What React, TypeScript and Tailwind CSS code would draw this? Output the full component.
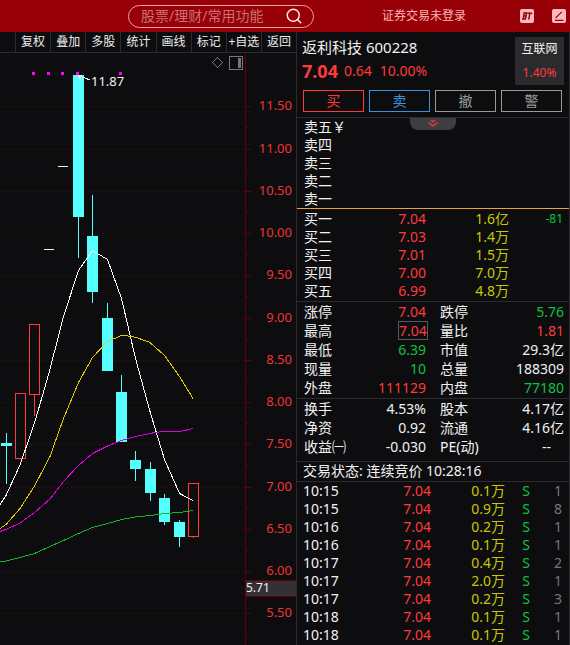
import { Search } from "lucide-react";

const TOOLS = ["复权", "叠加", "多股", "统计", "画线", "标记", "+自选", "返回"];

const ACTIONS = [
  { t: "买", c: "border-[#ff3a3a] text-[#ff3a3a]" },
  { t: "卖", c: "border-[#3f8fdc] text-[#3f8fdc]" },
  { t: "撤", c: "border-[#999999] text-[#999999]" },
  { t: "警", c: "border-[#999999] text-[#999999]" },
];

const ASKS = ["卖五￥", "卖四", "卖三", "卖二", "卖一"];

const BIDS = [
  { n: "买一", p: "7.04", v: "1.6亿", d: "-81" },
  { n: "买二", p: "7.03", v: "1.4万", d: "" },
  { n: "买三", p: "7.01", v: "1.5万", d: "" },
  { n: "买四", p: "7.00", v: "7.0万", d: "" },
  { n: "买五", p: "6.99", v: "4.8万", d: "" },
];

const RED = "text-[#ff3a3a]";
const GREEN = "text-[#0cc33f]";
const WHITE = "text-[#f2f2f2]";

type Stat = { k: string; v: string; c: string; boxed?: boolean };

const STATS: [Stat, Stat][] = [
  [{ k: "涨停", v: "7.04", c: RED }, { k: "跌停", v: "5.76", c: GREEN }],
  [{ k: "最高", v: "7.04", c: RED, boxed: true }, { k: "量比", v: "1.81", c: RED }],
  [{ k: "最低", v: "6.39", c: GREEN }, { k: "市值", v: "29.3亿", c: WHITE }],
  [{ k: "现量", v: "10", c: GREEN }, { k: "总量", v: "188309", c: WHITE }],
  [{ k: "外盘", v: "111129", c: RED }, { k: "内盘", v: "77180", c: GREEN }],
];

const FUNDAMENTALS: [Stat, Stat][] = [
  [{ k: "换手", v: "4.53%", c: WHITE }, { k: "股本", v: "4.17亿", c: WHITE }],
  [{ k: "净资", v: "0.92", c: WHITE }, { k: "流通", v: "4.16亿", c: WHITE }],
  [{ k: "收益㈠", v: "-0.030", c: WHITE }, { k: "PE(动)", v: "--", c: WHITE }],
];

const TRADES = [
  ["10:15", "7.04", "0.1万", "S", "1"],
  ["10:15", "7.04", "0.9万", "S", "8"],
  ["10:16", "7.04", "0.2万", "S", "1"],
  ["10:16", "7.04", "0.1万", "S", "1"],
  ["10:17", "7.04", "0.4万", "S", "2"],
  ["10:17", "7.04", "2.0万", "S", "1"],
  ["10:17", "7.04", "0.2万", "S", "3"],
  ["10:18", "7.04", "0.1万", "S", "1"],
  ["10:18", "7.04", "0.1万", "S", "1"],
];

// price label -> y on the chart
const LEVELS: [string, number][] = [
  ["11.50", 106],
  ["11.00", 149],
  ["10.50", 191],
  ["10.00", 233],
  ["9.50", 275],
  ["9.00", 318],
  ["8.50", 360],
  ["8.00", 402],
  ["7.50", 444],
  ["7.00", 487],
  ["6.50", 529],
  ["6.00", 571],
  ["5.50", 613],
];

// falling days: x, body top, body bottom, wick top, wick bottom
const DOWN = [
  [1, 443, 446, 433, 484],
  [73, 75, 217, 75, 258],
  [87, 236, 292, 195, 303],
  [102, 318, 371, 303, 371],
  [116, 392, 442, 375, 442],
  [130, 460, 469, 451, 481],
  [145, 469, 493, 462, 501],
  [159, 498, 522, 494, 525],
  [174, 522, 537, 520, 547],
];

// rising days: x, body top, body bottom, wick bottom
const UP = [
  [15, 393, 459, 459],
  [29, 324, 395, 416],
  [188, 483, 537, 538],
];

const AVERAGES = [
  {
    c: "#ffffff",
    p: "0,504.5 6,495.5 20,465 34.5,423 49,373 63.5,316.5 78.5,270.5 92.5,250.5 107.5,259.5 121.5,298.5 135.5,358.5 150,411.5 164.5,459.5 179.5,493.5 193,500.5",
  },
  {
    c: "#e6c800",
    p: "0,528.5 6,524.5 20,508.5 34.5,486 50,456.5 63.5,418.5 78.5,382.5 92.5,357.5 107.5,341.5 121.5,335.5 125,335.5 136.5,337.5 150,342.5 164.5,355.5 179.5,376.5 193,398.5",
  },
  {
    c: "#d800e0",
    p: "0,531.5 6,529.5 20,523 34.5,512.5 50,499 63.5,481.5 78.5,465.5 92.5,453.5 107.5,446 121.5,440.5 135.5,436.5 155,432.5 162.5,431.5 180,431.5 193,428.5",
  },
  {
    c: "#12b52c",
    p: "0,561.5 6,561 20,557.5 34.5,553.5 50,546.5 63.5,540.5 78.5,533.5 92.5,527.5 107.5,523.5 121.5,519.5 135.5,517 150,515.5 164.5,513.5 180,512.5 193,510.5",
  },
];

function TopBar() {
  return (
    <header className="flex h-8 items-center bg-[#960006] pr-1">
      <label className="ml-32 flex h-[23px] w-[186px] items-center rounded-full border border-[#efa3a3] pr-2.5 pl-3">
        <input
          type="text"
          aria-label="搜索"
          placeholder="股票/理财/常用功能"
          className="min-w-0 flex-1 bg-transparent text-sm leading-5 text-white outline-none placeholder:text-[#c97274]"
        />
        <Search className="size-[18px] text-[#ffe5e5]" strokeWidth={2} />
      </label>
      <button type="button" className="ml-[68px] text-xs whitespace-nowrap text-[#ffb4b4]">
        证券交易未登录
      </button>
      <div className="ml-auto flex gap-[18px]">
        <button type="button" aria-label="BT">
          <svg viewBox="0 0 14 14" className="size-3.5">
            <rect width="14" height="14" rx="2" fill="#ffb9b9" />
            <path
              d="M3.4 4H6.6L6.1 6.8 5.5 7.2 5.9 7.6 5.4 10H2.1M4.3 4 3.2 10M3.7 7H5.6M7.6 4.2H12.2M9.9 4.2 8.7 10.6"
              fill="none"
              stroke="#960006"
              strokeWidth="1.4"
            />
          </svg>
        </button>
        <button type="button" aria-label="编辑">
          <svg viewBox="0 0 14 14" className="size-3.5">
            <rect width="14" height="14" rx="2" fill="#ffb9b9" />
            <path d="M4 8.6 9.8 2.8M3.6 9 4.6 8M3 11.3H11.4" fill="none" stroke="#960006" strokeWidth="1.2" />
          </svg>
        </button>
      </div>
    </header>
  );
}

function Toolbar() {
  return (
    <nav className="flex h-[21px] border-b border-[#2b2b2d] pl-[15px]">
      {TOOLS.map((t) => (
        <button
          key={t}
          type="button"
          className="flex-1 border-l border-[#2b2b2d] text-xs whitespace-nowrap text-[#ececec]"
        >
          {t}
        </button>
      ))}
    </nav>
  );
}

function Chart() {
  return (
    <svg viewBox="0 53 296 592" className="block w-full" shapeRendering="crispEdges">
      {/* Price scale */}
      <path d="M245.5 53V645" stroke="#660000" />
      {LEVELS.map(([label, y]) => (
        <g key={label}>
          <path d={`M3 ${y + 0.5}H244`} stroke="#5c0808" strokeDasharray="1 3" />
          <path d={`M246 ${y + 0.5}H251M246 ${y + 21.5}H248`} stroke="#660000" />
          <text x="292" y={y + 4} textAnchor="end" fontSize="13" fill="#f03434">
            {label}
          </text>
        </g>
      ))}
      <rect x="245.5" y="580.5" width="51" height="16" fill="#323136" stroke="#660000" />
      <text x="246" y="592" fontSize="12" fill="#f2f2f2">
        5.71
      </text>

      {/* Candles */}
      {DOWN.map(([x, top, bottom, high, low]) => (
        <g key={x} fill="#55ffff">
          <rect x={x} y={top} width="11" height={bottom - top} />
          <rect x={x + 5} y={high} width="1" height={low - high} />
        </g>
      ))}
      {UP.map(([x, top, bottom, low]) => (
        <g key={x}>
          <rect x={x + 0.5} y={top + 0.5} width="10" height={bottom - top - 1} fill="none" stroke="#ff3a3a" />
          <rect x={x + 5} y={bottom} width="1" height={low - bottom} fill="#ff3a3a" />
        </g>
      ))}
      <path d="M44 249.5H54M58 166.5H68" stroke="#f2f2f2" />

      {AVERAGES.map((a) => (
        <polyline key={a.c} points={a.p} fill="none" stroke={a.c} />
      ))}

      {/* Event marks and the high */}
      <path d="M32 73.5h3M47 73.5h3M61 73.5h3M76 73.5h3M119 73.5h3" stroke="#ff00ff" strokeWidth="3" />
      <path d="M90 80 78.5 75.5M82 75.5H78.5L80.5 79.5" fill="none" stroke="#f2f2f2" />
      <text x="91" y="86" fontSize="13" fill="#f2f2f2">
        11.87
      </text>

      <path d="M217.5 57.5 222.5 62.5 217.5 67.5 212.5 62.5Z" fill="none" stroke="#77777a" />
      <rect x="229.5" y="56.5" width="13" height="13" fill="none" stroke="#77777a" />
      <rect x="238" y="58" width="3" height="10" fill="#77777a" />
    </svg>
  );
}

function Quote() {
  return (
    <section className="border-b border-[#2b2b2d] py-[5px]">
      <div className="flex justify-between px-[5px]">
        <div className="whitespace-nowrap">
          <h1 className="text-[15px] leading-5 text-[#f2f2f2]">返利科技 600228</h1>
          <p className="mt-1 flex h-5 items-center text-[#ff3a3a]">
            <strong className="text-lg leading-5 font-bold">7.04</strong>
            <span className="ml-1.5 leading-5">0.64</span>
            <span className="ml-2 leading-5">10.00%</span>
          </p>
        </div>
        <a
          href="#sector"
          className="flex h-12 w-[49px] flex-col items-center justify-between bg-[#2b2b2e] py-0.5 text-xs leading-5"
        >
          <span className="text-[#f2f2f2]">互联网</span>
          <span className="text-[#ff3a3a]">1.40%</span>
        </a>
      </div>
      <div className="mt-[5px] grid grid-cols-4 gap-[5px] pr-[7px] pl-1.5">
        {ACTIONS.map((a) => (
          <button key={a.t} type="button" className={`h-[22px] border text-sm leading-5 ${a.c}`}>
            {a.t}
          </button>
        ))}
      </div>
    </section>
  );
}

function OrderBook() {
  return (
    <section className="relative border-b border-[#2b2b2d]">
      <button
        type="button"
        aria-label="展开"
        className="absolute top-0 left-1/2 flex h-3 w-[46px] -translate-x-1/2 flex-col items-center rounded-b-lg bg-[#3e3e41]"
      >
        <svg viewBox="0 0 12 10" className="h-2.5 w-3" fill="none" stroke="#ff3a3a" strokeWidth="1.2">
          <path d="M4 2 6 4 8 2M1.5 4.5 6 8 10.5 4.5" />
        </svg>
      </button>
      <ul className="border-b border-[#e8a33a] pl-[7px]">
        {ASKS.map((a) => (
          <li key={a} className="h-[18px] leading-[18px]">
            {a}
          </li>
        ))}
      </ul>
      <table className="my-px w-full table-fixed border-collapse">
        <colgroup>
          <col className="w-[60px]" />
          <col className="w-[69px]" />
          <col className="w-[83px]" />
          <col />
        </colgroup>
        <tbody>
          {BIDS.map((b) => (
            <tr key={b.n} className="h-[18px] leading-[18px]">
              <th scope="row" className="p-0 pl-[7px] text-left font-normal">
                {b.n}
              </th>
              <td className="p-0 text-right text-[#ff3a3a]">{b.p}</td>
              <td className="p-0 text-right text-[#c8c800]">{b.v}</td>
              <td className="p-0 pr-1.5 text-right text-xs leading-[18px] text-[#0cc33f]">{b.d}</td>
            </tr>
          ))}
        </tbody>
      </table>
    </section>
  );
}

function StatTable({ rows }: { rows: [Stat, Stat][] }) {
  return (
    <table className="w-full table-fixed border-collapse">
      <colgroup>
        <col className="w-[60px]" />
        <col className="w-[71px]" />
        <col className="w-[60px]" />
        <col />
      </colgroup>
      <tbody>
        {rows.map(([a, b]) => (
          <tr key={a.k} className="h-[19px] leading-[19px] whitespace-nowrap">
            <th scope="row" className="p-0 pl-[7px] text-left font-normal">
              {a.k}
            </th>
            <td className={`p-0 text-right ${a.c}`}>
              {a.boxed ? (
                <span className="ml-auto block w-[30px] border border-[#58585b] pr-px leading-[17px]">{a.v}</span>
              ) : (
                <span className="pr-0.5">{a.v}</span>
              )}
            </td>
            <th scope="row" className="p-0 pl-3 text-left font-normal">
              {b.k}
            </th>
            <td className={`p-0 text-right ${b.c} ${b.v === "--" ? "pr-[18px]" : "pr-[5px]"}`}>{b.v}</td>
          </tr>
        ))}
      </tbody>
    </table>
  );
}

function Trades() {
  return (
    <table className="w-full table-fixed border-collapse">
      <colgroup>
        <col className="w-[60px]" />
        <col className="w-[74px]" />
        <col className="w-[74px]" />
        <col className="w-[42px]" />
        <col />
      </colgroup>
      <tbody>
        {TRADES.map(([time, price, vol, side, count], i) => (
          <tr key={i} className="h-[18px] leading-[18px]">
            <td className="p-0 pl-1.5">{time}</td>
            <td className="p-0 text-right text-[#ff3a3a]">{price}</td>
            <td className="p-0 text-right text-[#c8c800]">{vol}</td>
            <td className="p-0 text-center text-[#0cc33f]">{side}</td>
            <td className="p-0 pr-[7px] text-right text-[#77777a]">{count}</td>
          </tr>
        ))}
      </tbody>
    </table>
  );
}

export default function App() {
  return (
    <div className="min-h-screen bg-[#0d0d0f] font-['Noto_Sans','Noto_Sans_CJK_SC',sans-serif] text-sm text-[#f2f2f2]">
      <TopBar />
      <div className="flex">
        <main className="min-w-0 flex-1">
          <Toolbar />
          <Chart />
        </main>
        <aside className="w-[274px] shrink-0 border-x border-[#2b2b2d]">
          <Quote />
          <OrderBook />
          <section className="border-b border-[#2b2b2d] pb-px">
            <StatTable rows={STATS} />
          </section>
          <section className="border-b border-[#2b2b2d] pb-[5px]">
            <StatTable rows={FUNDAMENTALS} />
          </section>
          <p className="h-5 border-b border-[#2b2b2d] pl-1.5 leading-[18px]">交易状态: 连续竞价 10:28:16</p>
          <Trades />
        </aside>
      </div>
    </div>
  );
}
